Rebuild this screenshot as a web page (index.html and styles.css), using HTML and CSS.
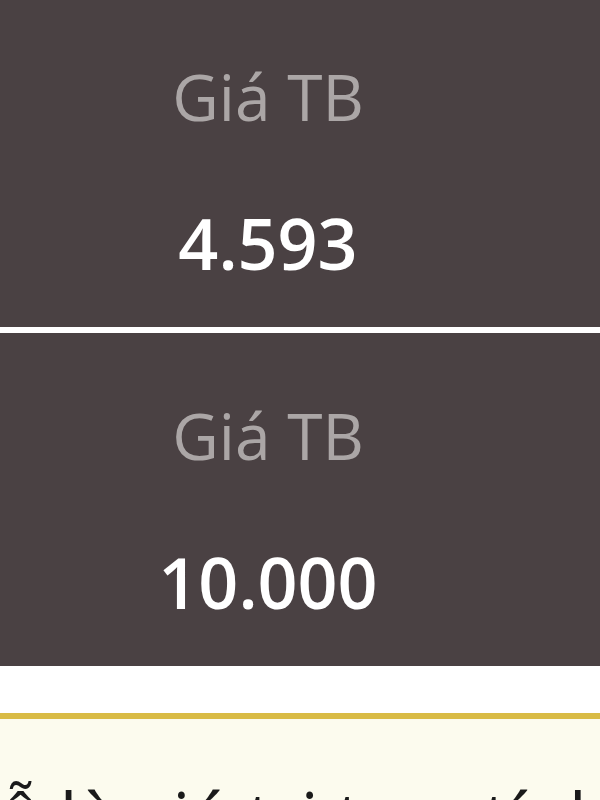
FILE: index.html
```html
<!DOCTYPE html>
<html lang="vi">
<head>
    <meta charset="UTF-8">
    <meta name="viewport" content="width=device-width, initial-scale=1.0">
    <title>Giá TB</title>
    <link rel="stylesheet" href="styles.css">
</head>
<body>

    <!-- Stat boxes -->
    <div class="stats">
        <div class="stat">
            <div class="stat-label">Giá TB</div>
            <div class="stat-value">4.593</div>
        </div>
        <div class="stat">
            <div class="stat-label">Giá TB</div>
            <div class="stat-value">10.000</div>
        </div>
    </div>

    <!-- Note -->
    <div class="note">
        <p>Lãi/lỗ là giá trị tạm tính hiện tại theo giá thị trường.</p>
    </div>

</body>
</html>
```

FILE: styles.css
```css
/* General Styling */
body {
    font-family: 'Open Sans', 'Noto Sans', sans-serif;
    margin: 0;
    padding: 0;
    background-color: #ffffff;
    color: #1a1a1a;
    overflow: hidden;
}

/* Stat boxes */
.stats {
    display: flex;
    flex-direction: column;
    gap: 6px;
    margin-top: -6px;
}

.stat {
    background-color: #4a4143;
    height: 333px;
    display: flex;
    flex-direction: column;
    align-items: center;
    padding: 58px 64px 0 0; /* content sits left of centre */
    box-sizing: border-box;
}

.stat-label {
    font-size: 64px;
    line-height: 90px;
    color: #aba6a6;
}

.stat-value {
    font-size: 70px;
    line-height: 98px;
    font-weight: 600;
    color: #ffffff;
    margin-top: 52px;
}

/* Note */
.note {
    margin-top: 47px;
    border-top: 6px solid #d9bb45;
    background-color: #fcfbee;
    padding: 48px 20px 40px 0;
    overflow: hidden;
}

.note p {
    margin: 0;
    font-size: 70px;
    line-height: 98px;
    text-indent: -137px;
    white-space: nowrap;
}
```
